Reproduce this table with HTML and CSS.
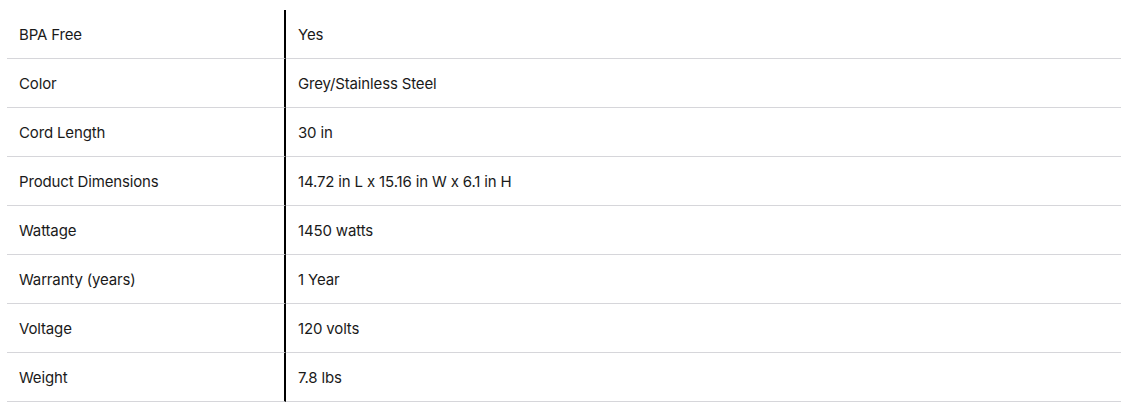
FILE: index.html
```html
<!DOCTYPE html>
<html>
<head>
<meta charset="utf-8">
<link rel="stylesheet" href="styles.css">
</head>
<body>
<div class="specs">
  <table class="spec-table">
    <tbody>
      <tr><td class="k">BPA Free</td><td class="v">Yes</td></tr>
      <tr><td class="k">Color</td><td class="v">Grey/Stainless Steel</td></tr>
      <tr><td class="k">Cord Length</td><td class="v">30 in</td></tr>
      <tr><td class="k">Product Dimensions</td><td class="v">14.72 in L x 15.16 in W x 6.1 in H</td></tr>
      <tr><td class="k">Wattage</td><td class="v">1450 watts</td></tr>
      <tr><td class="k">Warranty (years)</td><td class="v">1 Year</td></tr>
      <tr><td class="k">Voltage</td><td class="v">120 volts</td></tr>
      <tr><td class="k">Weight</td><td class="v">7.8 lbs</td></tr>
    </tbody>
  </table>
</div>
</body>
</html>
```
FILE: styles.css
```css
html, body {
  margin: 0;
  padding: 0;
  background: #fff;
}
.specs {
  padding: 10px 6px 0 7px;
}
.spec-table {
  width: 1114px;
  border-collapse: separate;
  border-spacing: 0;
  font-family: "Inter", "Liberation Sans", sans-serif;
  font-size: 15px;
  letter-spacing: -0.15px;
  color: #1a1a1a;
}
.spec-table td {
  height: 49px;
  padding: 0 12px;
  box-sizing: border-box;
  vertical-align: middle;
  border-bottom: 1px solid #d6d6da;
}
.spec-table td.k {
  width: 279px;
  border-right: 2px solid #000;
}
.spec-table td.v {
  padding-left: 12px;
}
```
